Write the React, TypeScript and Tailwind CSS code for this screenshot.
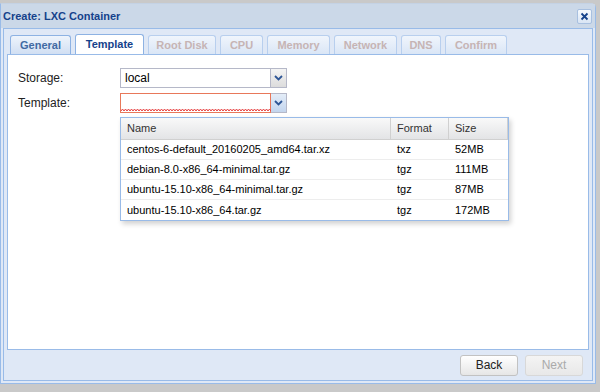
import { memo } from "react";

const TABS = [
  { label: "General", w: "w-[61px]", disabled: false },
  { label: "Template", w: "w-[69px]", disabled: false, active: true },
  { label: "Root Disk", w: "w-[68px]", disabled: true },
  { label: "CPU", w: "w-[43px]", disabled: true },
  { label: "Memory", w: "w-[63px]", disabled: true },
  { label: "Network", w: "w-[63px]", disabled: true },
  { label: "DNS", w: "w-[40px]", disabled: true },
  { label: "Confirm", w: "w-[62px]", disabled: true },
];

const TEMPLATES = [
  { name: "centos-6-default_20160205_amd64.tar.xz", format: "txz", size: "52MB" },
  { name: "debian-8.0-x86_64-minimal.tar.gz", format: "tgz", size: "111MB" },
  { name: "ubuntu-15.10-x86_64-minimal.tar.gz", format: "tgz", size: "87MB" },
  { name: "ubuntu-15.10-x86_64.tar.gz", format: "tgz", size: "172MB" },
];

function Chevron() {
  return (
    <svg width="9" height="6" viewBox="0 0 9 6">
      <path d="M1 1l3.5 3.5L8 1" fill="none" stroke="#2d5595" strokeWidth="1.8" />
    </svg>
  );
}

function Combo({ value, invalid }: { value?: string; invalid?: boolean }) {
  return (
    <div className="flex h-[20px] w-[167px]">
      <div
        className={`relative flex-1 bg-white border flex items-center px-[4px] text-[12px] text-black ${
          invalid ? "border-[#e8785a]" : "border-[#b5b8c8]"
        }`}
      >
        {value}
        {invalid && (
          <svg className="absolute left-0 bottom-0" width="150" height="4" viewBox="0 0 150 4">
            <path
              d={"M0 3" + Array.from({ length: 50 }, (_, i) => ` L${i * 3 + 1.5} 1 L${i * 3 + 3} 3`).join("")}
              fill="none"
              stroke="#e64040"
              strokeWidth="1"
            />
          </svg>
        )}
      </div>
      <div
        className={`w-[16px] flex items-center justify-center border border-l-0 border-[#b5b8c8] ${
          invalid ? "bg-gradient-to-b from-[#e4edf8] to-[#c3d5ee]" : "bg-gradient-to-b from-[#f4f4f4] to-[#dcdcdc]"
        }`}
      >
        <Chevron />
      </div>
    </div>
  );
}

const TemplateGrid = memo(function TemplateGrid() {
  return (
    <div className="absolute left-[112px] top-[62px] w-[389px] bg-white border border-[#99bbe8] shadow-[2px_3px_5px_rgba(0,0,0,0.18)] text-[11px] text-black">
      <div className="flex h-[22px] bg-gradient-to-b from-[#f9f9f9] to-[#e3e4e6] border-b border-[#d0d0d0] text-[#333]">
        <div className="w-[270px] px-[6px] flex items-center border-r border-[#d0d0d0]">Name</div>
        <div className="w-[58px] px-[6px] flex items-center border-r border-[#d0d0d0]">Format</div>
        <div className="flex-1 px-[6px] flex items-center border-r border-[#d0d0d0]">Size</div>
      </div>
      {TEMPLATES.map((t) => (
        <div key={t.name} className="flex h-[20px] border-b border-[#ededed] last:border-b-0">
          <div className="w-[270px] px-[6px] flex items-center">{t.name}</div>
          <div className="w-[58px] px-[6px] flex items-center">{t.format}</div>
          <div className="flex-1 px-[6px] flex items-center">{t.size}</div>
        </div>
      ))}
    </div>
  );
});

export default function App() {
  return (
    <div
      className="w-[600px] h-[392px] bg-[#c9c9c9] pt-[3px] pr-[4px] pb-[8px] overflow-hidden"
      style={{ fontFamily: "'Liberation Sans', Arial, sans-serif" }}
    >
      <div className="h-full flex flex-col bg-[#dfe8f6] border border-[#99bbe8] rounded-tr-[5px] border-t-[#c4d2e4]">
        {/* Title bar */}
        <div className="h-[24px] flex items-center justify-between pl-[2px] pr-[3px] bg-[#cbd8e8] shrink-0">
          <span className="text-[11px] font-bold text-[#15428b]">Create: LXC Container</span>
          <div className="w-[15px] h-[15px] rounded-[2px] bg-gradient-to-b from-[#f6f9fd] to-[#d9e5f4] border border-[#a8c0e0] flex items-center justify-center">
            <svg width="9" height="9" viewBox="0 0 9 9">
              <path d="M1.5 1.5l6 6M7.5 1.5l-6 6" stroke="#15428b" strokeWidth="1.8" />
            </svg>
          </div>
        </div>

        {/* Tab panel */}
        <div className="flex-1 flex flex-col px-[2px] min-h-0">
          <div className="flex-1 flex flex-col border border-[#99bbe8] bg-[#dfe8f6] px-[3px] min-h-0">
            <div className="flex items-end gap-[4px] pt-[6px] pl-[3px] h-[25px] shrink-0">
              {TABS.map((tab) => (
                <div
                  key={tab.label}
                  className={`${tab.w} h-[19px] flex items-center justify-center rounded-t-[3px] border border-b-0 text-[11px] font-bold ${
                    tab.active
                      ? "bg-white border-[#8db2e3] text-[#15428b] h-[20px]"
                      : tab.disabled
                        ? "bg-gradient-to-b from-[#f0f5fc] to-[#dae6f6] border-[#b8cfee] text-[#c6b4b4]"
                        : "bg-gradient-to-b from-[#eef4fc] to-[#d1dff3] border-[#8db2e3] text-[#416aa3]"
                  }`}
                >
                  {tab.label}
                </div>
              ))}
            </div>
            <div className="relative flex-1 bg-white border border-[#99bbe8] min-h-0">
              <div className="pt-[13px] pl-[10px] flex flex-col gap-[5px] text-[12px] text-[#222]">
                <div className="flex items-center">
                  <span className="w-[102px]">Storage:</span>
                  <Combo value="local" />
                </div>
                <div className="flex items-center">
                  <span className="w-[102px]">Template:</span>
                  <Combo invalid />
                </div>
              </div>
              <TemplateGrid />
            </div>
            {/* Button bar */}
            <div className="h-[30px] shrink-0 flex items-center justify-end gap-[7px] pr-[6px]">
              <button className="w-[58px] h-[21px] rounded-[3px] border border-[#c2c2c2] bg-gradient-to-b from-[#ffffff] to-[#e6e6e6] text-[12px] text-[#222]">
                Back
              </button>
              <button className="w-[58px] h-[21px] rounded-[3px] border border-[#d8d8d8] bg-gradient-to-b from-[#f4f4f4] to-[#e8e8e8] text-[12px] text-[#aaa]">
                Next
              </button>
            </div>
          </div>
        </div>
        <div className="h-[2px] shrink-0" />
      </div>
    </div>
  );
}
